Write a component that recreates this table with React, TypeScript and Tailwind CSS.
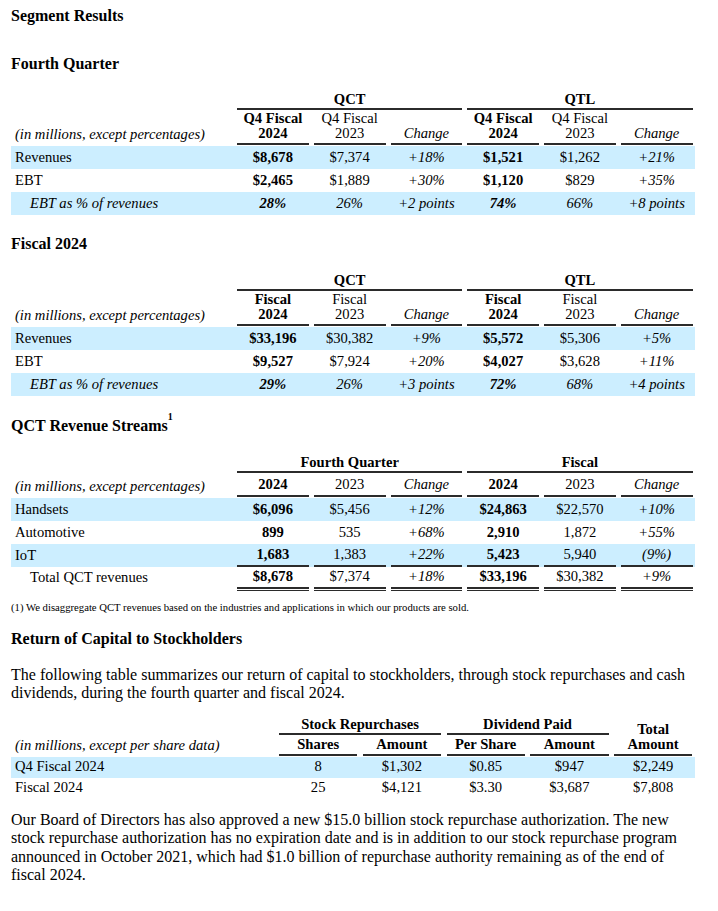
import React from "react";

const BAND = "bg-[#cceeff]";
const SIX = "grid grid-cols-[223.5px_repeat(6,1fr)]";
const FIVE = "grid grid-cols-[265.25px_repeat(5,1fr)]";

type Cell = { v: string; b?: boolean; i?: boolean };
const c = (v: string, b = false, i = false): Cell => ({ v, b, i });

interface RowProps {
  label: string;
  cells: Cell[];
  grid: string;
  band?: boolean;
  italic?: boolean;
  indent?: boolean;
  rule?: "single" | "double";
  tall?: boolean;
}

function Row({ label, cells, grid, band, italic, indent, rule, tall = true }: RowProps) {
  const h = rule === "double" ? "h-[23px]" : tall ? "h-[23px]" : "h-[21px]";
  return (
    <div className={`${grid} ${band ? BAND : ""} ${italic ? "italic" : ""}`}>
      <div className={`flex items-center ${indent ? "pl-[19px]" : "pl-1"} ${h}`}>{label}</div>
      {cells.map((x, k) => {
        const inner = (
          <div
            className={`flex items-center justify-center ${h} ${x.b ? "font-bold" : ""} ${
              x.i ? "italic" : ""
            } ${rule ? "border-b-2 border-[#2b2b2b]" : ""}`}
          >
            {x.v}
          </div>
        );
        return (
          <div key={k} className="px-[2.5px]">
            {rule === "double" ? <div className="border-b border-[#2b2b2b] pb-px">{inner}</div> : inner}
          </div>
        );
      })}
    </div>
  );
}

function GroupHead({ left, right }: { left: string; right: string }) {
  return (
    <div className={`${SIX} font-bold`}>
      <div />
      <div className="col-span-3 px-[2.5px]">
        <div className="border-b-2 border-[#2b2b2b] text-center leading-[18px]">{left}</div>
      </div>
      <div className="col-span-3 px-[2.5px]">
        <div className="border-b-2 border-[#2b2b2b] text-center leading-[18px]">{right}</div>
      </div>
    </div>
  );
}

function TwoLineHead({ top, cur, prev }: { top: string; cur: string; prev: string }) {
  const heads = [
    [top, cur, true],
    [top, prev, false],
    ["", "Change", false],
    [top, cur, true],
    [top, prev, false],
    ["", "Change", false],
  ] as const;
  return (
    <div className={`${SIX} items-end mb-px`}>
      <div className="pl-1 italic leading-[15px] pb-[3px]">(in millions, except percentages)</div>
      {heads.map(([a, b, bold], k) => (
        <div key={k} className="px-[2.5px] pt-px">
          <div
            className={`border-b-2 border-[#2b2b2b] text-center leading-[15px] pb-[2px] ${bold ? "font-bold" : ""} ${
              a === "" ? "italic" : ""
            }`}
          >
            <div>{a || "\u00a0"}</div>
            <div>{b}</div>
          </div>
        </div>
      ))}
    </div>
  );
}

function Title({ children, className = "" }: { children: React.ReactNode; className?: string }) {
  return <h2 className={`font-bold text-[16px] leading-[18px] ${className}`}>{children}</h2>;
}

export default function App() {
  return (
    <div className="w-[718px] min-h-[911px] bg-white text-black font-['Liberation_Serif',serif] text-[14.6px] pl-[11px] pt-[7px]">
      <div className="w-[684px]">
        <Title>Segment Results</Title>

        <Title className="mt-[30px]">Fourth Quarter</Title>
        <div className="mt-[17px]">
          <GroupHead left="QCT" right="QTL" />
          <TwoLineHead top="Q4 Fiscal" cur="2024" prev="2023" />
          <Row grid={SIX} band label="Revenues" cells={[c("$8,678", true), c("$7,374"), c("+18%", false, true), c("$1,521", true), c("$1,262"), c("+21%", false, true)]} />
          <Row grid={SIX} label="EBT" cells={[c("$2,465", true), c("$1,889"), c("+30%", false, true), c("$1,120", true), c("$829"), c("+35%", false, true)]} />
          <Row grid={SIX} band italic indent label="EBT as % of revenues" cells={[c("28%", true), c("26%"), c("+2 points"), c("74%", true), c("66%"), c("+8 points")]} />
        </div>

        <Title className="mt-[20px]">Fiscal 2024</Title>
        <div className="mt-[18px]">
          <GroupHead left="QCT" right="QTL" />
          <TwoLineHead top="Fiscal" cur="2024" prev="2023" />
          <Row grid={SIX} band label="Revenues" cells={[c("$33,196", true), c("$30,382"), c("+9%", false, true), c("$5,572", true), c("$5,306"), c("+5%", false, true)]} />
          <Row grid={SIX} label="EBT" cells={[c("$9,527", true), c("$7,924"), c("+20%", false, true), c("$4,027", true), c("$3,628"), c("+11%", false, true)]} />
          <Row grid={SIX} band italic indent label="EBT as % of revenues" cells={[c("29%", true), c("26%"), c("+3 points"), c("72%", true), c("68%"), c("+4 points")]} />
        </div>

        <Title className="mt-[21px]">
          QCT Revenue Streams<sup className="text-[10px] align-[6px]">1</sup>
        </Title>
        <div className="mt-[18px]">
          <GroupHead left="Fourth Quarter" right="Fiscal" />
          <div className={`${SIX} items-end mb-px`}>
            <div className="pl-1 italic leading-[17px] pb-[2px]">(in millions, except percentages)</div>
            {["2024", "2023", "Change", "2024", "2023", "Change"].map((h, k) => (
              <div key={k} className="px-[2.5px] pt-[3px]">
                <div
                  className={`border-b-2 border-[#2b2b2b] text-center leading-[17px] pb-[2px] ${
                    h === "2024" ? "font-bold" : h === "Change" ? "italic" : ""
                  }`}
                >
                  {h}
                </div>
              </div>
            ))}
          </div>
          <Row grid={SIX} band label="Handsets" cells={[c("$6,096", true), c("$5,456"), c("+12%", false, true), c("$24,863", true), c("$22,570"), c("+10%", false, true)]} />
          <Row grid={SIX} label="Automotive" cells={[c("899", true), c("535"), c("+68%", false, true), c("2,910", true), c("1,872"), c("+55%", false, true)]} />
          <Row grid={SIX} band rule="single" label="IoT" cells={[c("1,683", true), c("1,383"), c("+22%", false, true), c("5,423", true), c("5,940"), c("(9%)", false, true)]} />
          <div className="-mt-px">
            <Row grid={SIX} rule="double" indent label="Total QCT revenues" cells={[c("$8,678", true), c("$7,374"), c("+18%", false, true), c("$33,196", true), c("$30,382"), c("+9%", false, true)]} />
          </div>
        </div>
        <p className="mt-[10px] text-[10.7px] leading-[12px]">
          (1) We disaggregate QCT revenues based on the industries and applications in which our products are sold.
        </p>

        <Title className="mt-[17px]">Return of Capital to Stockholders</Title>
        <p className="mt-[18px] text-[16px] leading-[18.4px]">
          The following table summarizes our return of capital to stockholders, through stock repurchases and cash
          dividends, during the fourth quarter and fiscal 2024.
        </p>

        <div className="mt-[13px]">
          <div className={`${FIVE} grid-rows-[auto_auto] items-end mb-px`}>
            <div />
            <div className="col-span-2 px-[2.75px]">
              <div className="border-b-2 border-[#2b2b2b] text-center font-bold leading-[17px]">Stock Repurchases</div>
            </div>
            <div className="col-span-2 px-[2.75px]">
              <div className="border-b-2 border-[#2b2b2b] text-center font-bold leading-[17px]">Dividend Paid</div>
            </div>
            <div className="row-span-2 px-[2.75px] self-end">
              <div className="border-b-2 border-[#2b2b2b] text-center font-bold leading-[15px] pb-[2px]">
                <div>Total</div>
                <div>Amount</div>
              </div>
            </div>
            <div className="pl-1 italic leading-[17px] pb-[2px]">(in millions, except per share data)</div>
            {["Shares", "Amount", "Per Share", "Amount"].map((h, k) => (
              <div key={k} className="px-[2.75px] pt-px">
                <div className="border-b-2 border-[#2b2b2b] text-center font-bold leading-[17px] pb-[1px]">{h}</div>
              </div>
            ))}
          </div>
          <Row grid={FIVE} band tall={false} label="Q4 Fiscal 2024" cells={[c("8"), c("$1,302"), c("$0.85"), c("$947"), c("$2,249")]} />
          <Row grid={FIVE} tall={false} label="Fiscal 2024" cells={[c("25"), c("$4,121"), c("$3.30"), c("$3,687"), c("$7,808")]} />
        </div>

        <p className="mt-[12px] text-[16px] leading-[18.4px]">
          Our Board of Directors has also approved a new $15.0 billion stock repurchase authorization. The new stock
          repurchase authorization has no expiration date and is in addition to our stock repurchase program
          announced in October 2021, which had $1.0 billion of repurchase authority remaining as of the end of fiscal
          2024.
        </p>
      </div>
    </div>
  );
}
